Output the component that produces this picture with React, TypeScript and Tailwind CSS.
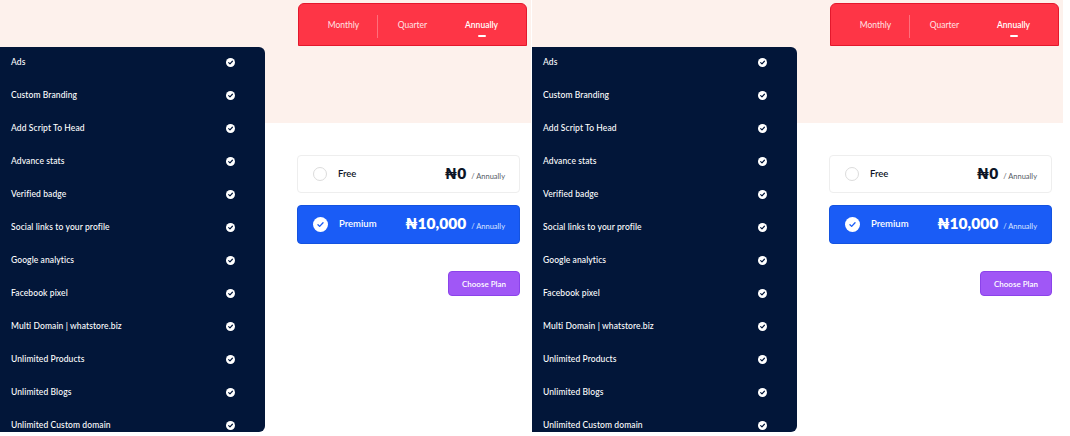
import React from 'react'

const FEATURES = [
  'Ads',
  'Custom Branding',
  'Add Script To Head',
  'Advance stats',
  'Verified badge',
  'Social links to your profile',
  'Google analytics',
  'Facebook pixel',
  'Multi Domain | whatstore.biz',
  'Unlimited Products',
  'Unlimited Blogs',
  'Unlimited Custom domain',
]

const FONT = "font-['Lato','Noto_Sans','DejaVu_Sans',sans-serif]"

function CheckDot() {
  return (
    <svg width="9" height="9" viewBox="0 0 10 10" className="shrink-0">
      <circle cx="5" cy="5" r="5" fill="#fff" />
      <path d="M3 5.2 L4.4 6.5 L7.1 3.6" fill="none" stroke="#021639" strokeWidth="1.3" strokeLinecap="round" strokeLinejoin="round" />
    </svg>
  )
}

function FeaturePanel() {
  return (
    <div className="mt-[47px] h-[385px] w-[265px] shrink-0 overflow-hidden rounded-r-[6px] bg-[#021639] pt-[9px]">
      <div className="flex flex-col gap-[21px]">
        {FEATURES.map((f) => (
          <div key={f} className="flex h-[12px] items-center justify-between pl-[11px] pr-[30px]">
            <span className="text-[8.5px] leading-[12px] font-medium tracking-[0.1px] text-white">{f}</span>
            <CheckDot />
          </div>
        ))}
      </div>
    </div>
  )
}

function PeriodTabs() {
  const tabs = ['Monthly', 'Quarter', 'Annually']
  return (
    <div className="ml-px mt-[3px] flex h-[43px] w-[229px] rounded-t-[6px] border border-[#e3182c] bg-[#fe3546] px-[10px]">
      {tabs.map((t, i) => (
        <div key={t} className="relative flex flex-1 flex-col items-center pt-[16px]">
          {i === 0 && <div className="absolute right-0 top-[11px] h-[23px] w-px bg-[#ff6f7b]" />}
          <span className={`text-[8.5px] leading-[11px] ${i === 2 ? 'font-semibold text-white' : 'text-[#ffe3e5]'}`}>{t}</span>
          {i === 2 && <div className="mt-[4px] h-[2px] w-[8px] rounded-full bg-white" />}
        </div>
      ))}
    </div>
  )
}

function PlanCard({ name, price, selected }: { name: string; price: string; selected: boolean }) {
  return (
    <div
      className={`flex w-[223px] items-center rounded-[4px] border pl-[15px] pr-[14px] ${
        selected ? 'h-[39px] border-[#1453e0] bg-[#1a5cf6] text-white' : 'h-[38px] border-[#eeeeee] bg-white text-[#0d1526]'
      }`}
    >
      {selected ? (
        <svg width="15" height="15" viewBox="0 0 16 16" className="shrink-0">
          <circle cx="8" cy="8" r="8" fill="#fff" />
          <path d="M5.3 8.3 L7.1 10 L10.7 6.1" fill="none" stroke="#1a5cf6" strokeWidth="1.4" strokeLinecap="round" strokeLinejoin="round" />
        </svg>
      ) : (
        <div className="h-[14px] w-[14px] shrink-0 rounded-full border border-[#dcdcdc] bg-white" />
      )}
      <span className="ml-[11px] text-[9.5px] font-semibold">{name}</span>
      <div className="ml-auto flex items-baseline gap-[5px]">
        <span className="text-[15.5px] leading-none font-extrabold">{price}</span>
        <span className={`text-[7.5px] ${selected ? 'text-[#dbe5ff]' : 'text-[#555b66]'}`}>/ Annually</span>
      </div>
    </div>
  )
}

function PlanScreen() {
  return (
    <div className="flex h-[436px] w-[532px] shrink-0 bg-[linear-gradient(to_bottom,#fdf1ec_123px,#ffffff_123px)] bg-[length:531px_100%] bg-no-repeat">
      <FeaturePanel />
      <div className="flex flex-col pl-[32px]">
        <PeriodTabs />
        <div className="mt-[109px] flex flex-col gap-[12px]">
          <PlanCard name="Free" price="₦0" selected={false} />
          <PlanCard name="Premium" price="₦10,000" selected />
        </div>
        <div className="mt-[27px] flex w-[223px] justify-end">
          <button className="h-[25px] w-[72px] rounded-[4px] border border-[#8b43ea] bg-[#a057f6] text-[8px] font-semibold text-white">
            Choose Plan
          </button>
        </div>
      </div>
    </div>
  )
}

export default function App() {
  return (
    <div className={`flex h-[436px] w-[1070px] overflow-hidden bg-white ${FONT}`}>
      <PlanScreen />
      <PlanScreen />
    </div>
  )
}
